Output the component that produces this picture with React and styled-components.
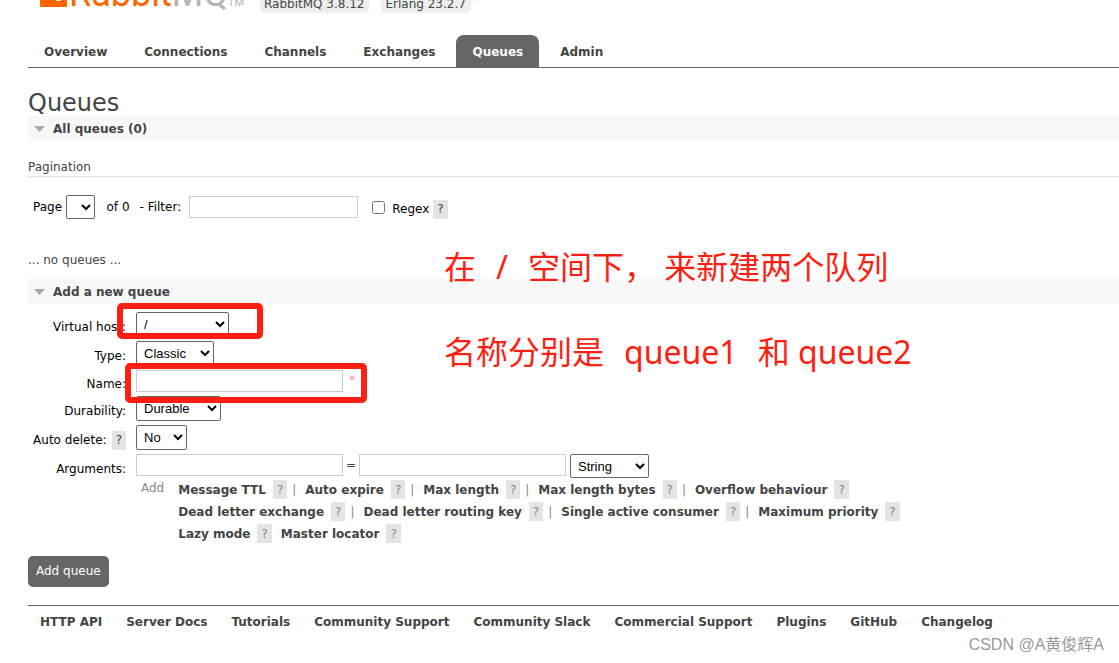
import React from 'react';
import styled, { createGlobalStyle } from 'styled-components';

const GlobalStyle = createGlobalStyle`
  * { box-sizing: border-box; }
  body {
    margin: 0;
    background: #fff;
    color: #444;
    font: 12px/16px "DejaVu Sans", Verdana, sans-serif;
  }
  a { color: #444; font-weight: bold; text-decoration: none; white-space: nowrap; }
`;

const Page = styled.div`
  position: relative;
  min-height: 100vh;
  padding-left: 28px;
  overflow: hidden;
`;

const Header = styled.header`
  display: flex;
  align-items: flex-end;
  height: 13px;
  padding-left: 12px;
  overflow: hidden;
`;

const Brand = styled.a`
  display: flex;
  align-items: flex-end;
  width: 208px;
  margin-right: 12px;
  font: 36px/38px Roboto, sans-serif;
  color: #f60;
`;

const BrandMark = styled.svg`
  flex: none;
  margin: 0 2px 6px 0;
`;

const BrandGrey = styled.span`
  color: #b4b4b4;
`;

const Trademark = styled.small`
  font: 11px/20px Roboto, sans-serif;
  color: #b4b4b4;
`;

const Version = styled.span`
  margin-right: 12px;
  padding: 2px 5px 2px 4px;
  border-radius: 5px;
  background: #eee;
  line-height: 14px;
  white-space: nowrap;
`;

const Tabs = styled.nav`
  display: flex;
  gap: 5px;
  margin-top: 22px;
  border-bottom: 1px solid #666;
`;

const Tab = styled.a`
  padding: 9px 16px 7px;
  border-radius: 8px 8px 0 0;
  background: ${(p) => (p.$active ? '#666' : 'transparent')};
  color: ${(p) => (p.$active ? '#fff' : '#444')};
`;

const Title = styled.h1`
  margin: 22px 0 0;
  font-size: 24px;
  line-height: 26px;
  font-weight: normal;
`;

const SectionBar = styled.h2`
  display: flex;
  align-items: center;
  gap: 8px;
  height: 25px;
  margin: 0;
  padding-left: 6px;
  background: #f8f8f8;
  font-size: 12px;
`;

const Subhead = styled.h3`
  margin: 18px 0;
  padding-bottom: 1px;
  border-bottom: 1px solid #e0e0e0;
  font-size: 12px;
  font-weight: normal;
`;

const Pager = styled.div`
  display: flex;
  align-items: center;
  height: 24px;
  padding-left: 5px;
  color: #000;
`;

const Label = styled.label`
  margin-right: ${(p) => p.$gap || 4}px;
  white-space: pre;
`;

const Select = styled.select`
  width: ${(p) => p.$width}px;
  height: ${(p) => p.$height || 25}px;
  margin: 0;
  padding: 0 0 0 3px;
  border: 1px solid #666;
  border-radius: 2px;
  background: #fff;
  color: #000;
  font: 13px "Liberation Sans", Arial, sans-serif;
`;

const Input = styled.input`
  width: ${(p) => p.$width || 207}px;
  height: 22px;
  border: 1px solid #ccc;
  background: #fff;
`;

const Checkbox = styled.input`
  width: 13px;
  height: 13px;
  margin: 0 7px 0 14px;
`;

const RegexGroup = styled.span`
  display: flex;
  align-items: center;
  padding-top: 4px;
`;

const HelpMark = styled.button`
  height: 19px;
  padding: 0 4px;
  border: 0;
  background: #e4e4e4;
  color: ${(p) => (p.$muted ? '#888' : '#444')};
  font: 12px/16px "DejaVu Sans", Verdana, sans-serif;
`;

const Empty = styled.p`
  margin: 33px 0 11px;
`;

const Form = styled.form`
  padding-top: 6px;
`;

const Field = styled.div`
  display: grid;
  grid-template-columns: 98px 1fr;
  column-gap: 10px;
`;

const FieldLabel = styled.div`
  display: flex;
  align-items: center;
  justify-content: flex-end;
  gap: 5px;
  padding-top: 5px;
  color: #000;
  white-space: nowrap;
`;

const Control = styled.div`
  display: flex;
  gap: ${(p) => p.$gap || 5}px;
  padding: 2px 0;
`;

const Equals = styled.span`
  display: flex;
  justify-content: center;
  width: 8px;
  line-height: 22px;
`;

const Required = styled.span`
  padding-left: 1px;
  line-height: 20px;
  color: #f88;
`;

const Options = styled.div`
  display: flex;
  gap: 14px;
  padding-left: 113px;
  color: #888;
`;

const OptionRows = styled.div`
  display: grid;
  row-gap: 3px;
`;

const OptionRow = styled.div`
  display: flex;
  align-items: center;
`;

const Option = styled.span`
  display: flex;
  align-items: center;
  gap: 7px;
`;

const Divider = styled.span`
  width: 18px;
  padding-left: 5px;
  color: #888;
`;

const Gap = styled.span`
  width: 9px;
`;

const Submit = styled.button`
  display: block;
  margin-top: 13px;
  padding: 8px;
  height: 31px;
  border: 0;
  border-radius: 5px;
  background: #666;
  color: #fff;
  font: 12px/15px "DejaVu Sans", Verdana, sans-serif;
  white-space: nowrap;
`;

const Footer = styled.footer`
  display: flex;
  gap: 24px;
  margin-top: 18px;
  padding: 8px 12px;
  border-top: 1px solid #666;
`;

const Frame = styled.div`
  position: absolute;
  left: ${(p) => p.$left}px;
  top: ${(p) => p.$top}px;
  width: ${(p) => p.$width}px;
  height: ${(p) => p.$height}px;
  border: 6px solid #ff1e12;
  border-radius: 5px;
  pointer-events: none;
`;

const Note = styled.div`
  position: absolute;
  left: 444px;
  top: 246px;
  color: #ff1e12;
  font: 32px/42px "Noto Sans", "Noto Sans CJK SC", sans-serif;
  white-space: nowrap;
  pointer-events: none;
`;

const NoteLine = styled.p`
  display: flex;
  gap: 20px;
  margin: 0 0 43px;
`;

const Watermark = styled.div`
  position: absolute;
  right: 15px;
  bottom: 6px;
  color: #999;
  font: 16px/24px "Liberation Sans", "Noto Sans CJK SC", sans-serif;
`;

const tabs = ['Overview', 'Connections', 'Channels', 'Exchanges', 'Queues', 'Admin'];

const optionRows = [
  ['Message TTL', 'Auto expire', 'Max length', 'Max length bytes', 'Overflow behaviour'],
  ['Dead letter exchange', 'Dead letter routing key', 'Single active consumer', 'Maximum priority'],
  ['Lazy mode', 'Master locator'],
];

const footerLinks = [
  'HTTP API', 'Server Docs', 'Tutorials', 'Community Support', 'Community Slack',
  'Commercial Support', 'Plugins', 'GitHub', 'Changelog',
];

const Triangle = () => (
  <svg width="11" height="6" viewBox="0 0 11 6" aria-hidden="true">
    <path d="M0 0h11L5.5 6z" fill="#aaa" />
  </svg>
);

const Help = ({ muted }) => (
  <HelpMark type="button" $muted={muted}>?</HelpMark>
);

const SelectField = ({ id, label, value, width, help }) => (
  <Field>
    <FieldLabel>
      <label htmlFor={id}>{label}:</label>
      {help && <Help />}
    </FieldLabel>
    <Control>
      <Select id={id} $width={width}><option>{value}</option></Select>
    </Control>
  </Field>
);

export default function App() {
  return (
    <>
      <GlobalStyle />
      <Page>
        <Header>
          <Brand href="#">
            <BrandMark width="27" height="28" viewBox="0 0 27 28">
              <path
                d="M1 0h7v10q0 2 2 2h4q2 0 2-2V0h7v10q0 2 2 2h1q1 0 1 2v13q0 1-1 1H1q-1 0-1-1V1q0-1 1-1zM16 19v2q0 1 1 1h3q1 0 1-1v-3q0-1-1-1h-3q-1 0-1 1z"
                fill="#f60"
                fillRule="evenodd"
              />
            </BrandMark>
            Rabbit<BrandGrey>MQ</BrandGrey><Trademark>TM</Trademark>
          </Brand>
          <Version>RabbitMQ 3.8.12</Version>
          <Version>Erlang 23.2.7</Version>
        </Header>
        <Tabs>
          {tabs.map((t) => (
            <Tab key={t} href={`#${t}`} $active={t === 'Queues'}>{t}</Tab>
          ))}
        </Tabs>

        <main>
          <Title>Queues</Title>
          <SectionBar><Triangle />All queues (0)</SectionBar>
          <Subhead>Pagination</Subhead>
          <Pager>
            <Label htmlFor="page">Page</Label>
            <Select id="page" $width={29} $height={24} />
            <Label as="span" $gap={10}>{'   of 0'}</Label>
            <Label htmlFor="filter" $gap={8}>- Filter:</Label>
            <Input id="filter" $width={169} />
            <Checkbox type="checkbox" id="regex" />
            <RegexGroup>
              <Label htmlFor="regex">Regex</Label>
              <Help />
            </RegexGroup>
          </Pager>
          <Empty>... no queues ...</Empty>

          <SectionBar><Triangle />Add a new queue</SectionBar>
          <Form onSubmit={(e) => e.preventDefault()}>
            <SelectField id="vhost" label="Virtual host" value="/" width={93} />
            <SelectField id="type" label="Type" value="Classic" width={78} />
            <Field>
              <FieldLabel><label htmlFor="name">Name:</label></FieldLabel>
              <Control><Input id="name" /><Required>*</Required></Control>
            </Field>
            <SelectField id="durability" label="Durability" value="Durable" width={85} />
            <SelectField id="autodelete" label="Auto delete" value="No" width={51} help />
            <Field>
              <FieldLabel><label htmlFor="argkey">Arguments:</label></FieldLabel>
              <Control $gap={4}>
                <Input id="argkey" />
                <Equals>=</Equals>
                <Input aria-label="Argument value" />
                <Select aria-label="Argument type" $width={79} $height={24}><option>String</option></Select>
              </Control>
            </Field>
            <Options>
              <span>Add</span>
              <OptionRows>
                {optionRows.map((row, r) => (
                  <OptionRow key={row[0]}>
                    {row.map((name, i) => (
                      <React.Fragment key={name}>
                        {i > 0 && (r < 2 ? <Divider>|</Divider> : <Gap />)}
                        <Option><a href="#arguments">{name}</a><Help muted /></Option>
                      </React.Fragment>
                    ))}
                  </OptionRow>
                ))}
              </OptionRows>
            </Options>
            <Submit type="submit">Add queue</Submit>
          </Form>
        </main>

        <Footer>
          {footerLinks.map((l) => <a key={l} href="#footer">{l}</a>)}
        </Footer>

        <Frame $left={117} $top={303} $width={146} $height={36} />
        <Frame $left={125} $top={363} $width={242} $height={40} />
        <Note>
          <NoteLine>
            <span>在</span>
            <span>/</span>
            <span>空间下， 来新建两个队列</span>
          </NoteLine>
          <NoteLine>
            <span>名称分别是</span>
            <span>queue1</span>
            <span>和 queue2</span>
          </NoteLine>
        </Note>
        <Watermark>CSDN @A黄俊辉A</Watermark>
      </Page>
    </>
  );
}
